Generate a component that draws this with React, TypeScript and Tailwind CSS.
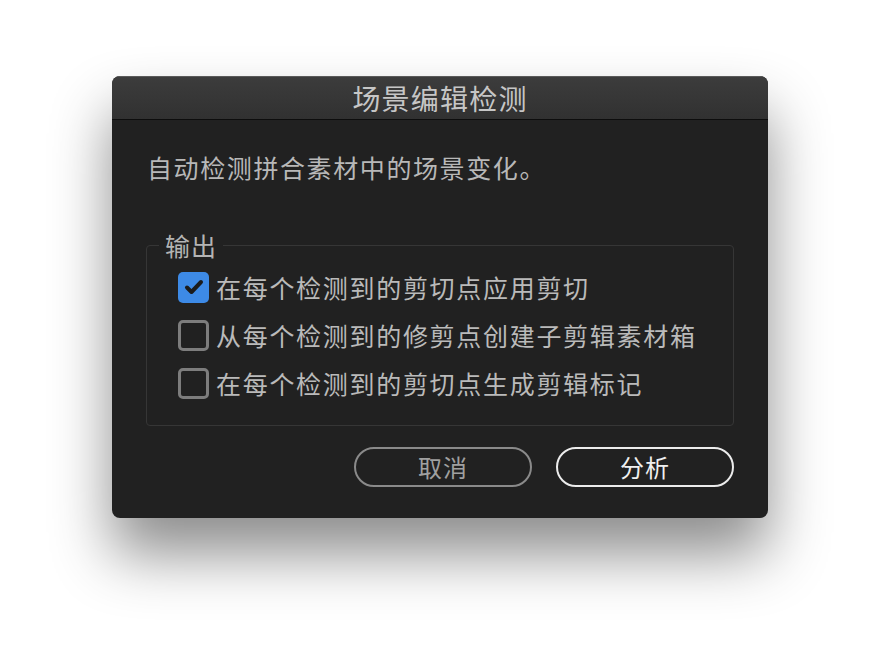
const options = [
  { label: '在每个检测到的剪切点应用剪切', checked: true },
  { label: '从每个检测到的修剪点创建子剪辑素材箱', checked: false },
  { label: '在每个检测到的剪切点生成剪辑标记', checked: false },
]

function Checkbox({ checked }: { checked: boolean }) {
  if (checked) {
    return (
      <div className="flex h-[31px] w-[31px] shrink-0 items-center justify-center rounded-[5px] bg-[#3d8ae6]">
        <svg viewBox="0 0 24 24" className="h-[24px] w-[24px]" fill="none" stroke="#1b1b1b" strokeWidth="4" strokeLinecap="round" strokeLinejoin="round">
          <path d="M5 12.5l4.5 4.5L19 7" />
        </svg>
      </div>
    )
  }
  return <div className="h-[31px] w-[31px] shrink-0 rounded-[5px] border-[3px] border-[#7d7d7d]" />
}

export default function App() {
  return (
    <div className="h-[666px] w-[880px] overflow-hidden bg-white pl-[112px] pt-[76px] font-['Noto_Sans_CJK_SC',sans-serif]">
      <div className="flex h-[442px] w-[656px] flex-col overflow-hidden rounded-[8px] bg-[#212121] shadow-[0_36px_60px_rgba(0,0,0,0.45)]">
        {/* title bar */}
        <div className="flex h-[44px] shrink-0 items-center justify-center border-b border-[#0d0d0d] border-t border-t-[#5a5a5a] bg-gradient-to-b from-[#3c3c3c] to-[#313131]">
          <span className="text-[28px] leading-none tracking-[1.2px] text-[#c6c6c6]">场景编辑检测</span>
        </div>

        <div className="flex flex-col px-[34px] pt-[31px]">
          <p className="pl-[1px] text-[25px] leading-[32px] tracking-[1.6px] text-[#b8b8b8]">
            自动检测拼合素材中的场景变化。
          </p>

          <fieldset className="mt-[48px] rounded-[4px] border border-[#363636] pb-[18px] pl-[31px] pt-[4px]">
            <legend className="-ml-[19px] px-[6px] text-[25px] leading-[28px] tracking-[1px] text-[#b4b4b4]">输出</legend>
            {options.map((o) => (
              <div key={o.label} className="flex h-[48px] items-center gap-[7px]">
                <Checkbox checked={o.checked} />
                <span className="text-[25px] leading-none tracking-[1.7px] text-[#bababa]">{o.label}</span>
              </div>
            ))}
          </fieldset>

          <div className="mt-[21px] flex justify-end gap-[24px]">
            <button className="flex h-[40px] w-[178px] items-center justify-center rounded-full border-2 border-[#8a8a8a] text-[24px] tracking-[1px] text-[#a0a0a0]">
              取消
            </button>
            <button className="flex h-[40px] w-[178px] items-center justify-center rounded-full border-2 border-[#ececec] text-[24px] tracking-[1px] text-[#f0f0f0]">
              分析
            </button>
          </div>
        </div>
      </div>
    </div>
  )
}
